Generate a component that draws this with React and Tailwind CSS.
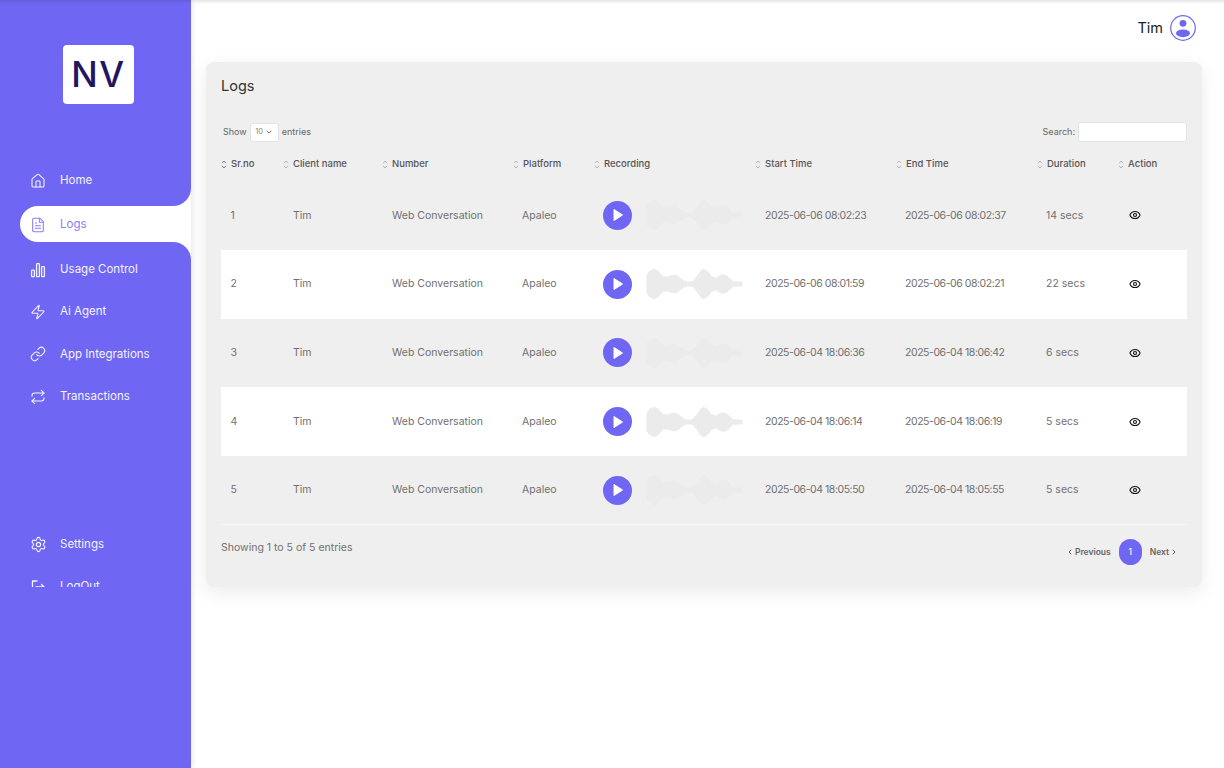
import React from "react";
import { House, FileText, Zap, Link, Repeat, Settings, Eye, ChevronLeft, ChevronRight, ChevronDown } from "lucide-react";

const rows = [
  { id: 1, start: "2025-06-06 08:02:23", end: "2025-06-06 08:02:37", duration: "14 secs" },
  { id: 2, start: "2025-06-06 08:01:59", end: "2025-06-06 08:02:21", duration: "22 secs" },
  { id: 3, start: "2025-06-04 18:06:36", end: "2025-06-04 18:06:42", duration: "6 secs" },
  { id: 4, start: "2025-06-04 18:06:14", end: "2025-06-04 18:06:19", duration: "5 secs" },
  { id: 5, start: "2025-06-04 18:05:50", end: "2025-06-04 18:05:55", duration: "5 secs" },
];

const columns = [
  { label: "Sr.no", width: "w-[62px]", sorted: true },
  { label: "Client name", width: "w-[99px]" },
  { label: "Number", width: "w-[131px]" },
  { label: "Platform", width: "w-[81px]" },
  { label: "Recording", width: "w-[161px]" },
  { label: "Start Time", width: "w-[141px]" },
  { label: "End Time", width: "w-[141px]" },
  { label: "Duration", width: "w-[81px]" },
  { label: "Action", width: "w-[69px]" },
];

// [x, half height] points of the wave form
const envelope = [[0, 10], [3, 14], [8, 16], [12, 14], [16, 9], [20, 8], [26, 10], [30, 10], [34, 7], [38, 4], [42, 3], [46, 3.5], [50, 8], [54, 14], [57, 16], [61, 14], [65, 9], [69, 7], [74, 10], [78, 10.5], [82, 8], [86, 4], [90, 2.5], [96, 2.5]];

function heightAt(x) {
  for (let i = 1; i < envelope.length; i++) {
    const [x0, h0] = envelope[i - 1];
    const [x1, h1] = envelope[i];
    if (x <= x1) return h0 + ((h1 - h0) * (x - x0)) / (x1 - x0);
  }
  return 2.5;
}

function wavePath() {
  const top = [];
  const bottom = [];
  for (let x = 0; x <= 96; x += 0.75) {
    const jag = x < 88 ? [0, 1.3, 0.3, 1.6][Math.round(x / 0.75) % 4] : 0;
    const h = heightAt(x) - jag;
    top.push(`${x},${(16 - h).toFixed(1)}`);
    bottom.unshift(`${x},${(16 + h).toFixed(1)}`);
  }
  return `M${top.join(" L")} L${bottom.join(" L")} Z`;
}

function Wave() {
  return (
    <svg width="97" height="32" viewBox="0 0 96 32" className="block">
      <path d={wavePath()} fill="#ebebeb" />
    </svg>
  );
}

function BarsIcon() {
  return (
    <svg width="16" height="16" viewBox="0 0 16 16" fill="none" stroke="currentColor" strokeWidth="1.3">
      <rect x="1.6" y="8.2" width="2.8" height="6.4" rx="0.6" />
      <rect x="6.6" y="1.6" width="2.8" height="13" rx="0.6" />
      <rect x="11.6" y="4.6" width="2.8" height="10" rx="0.6" />
    </svg>
  );
}

function LogOutIcon() {
  return (
    <svg width="16" height="16" viewBox="0 0 16 16" fill="none" stroke="currentColor" strokeWidth="1.3" strokeLinecap="round" strokeLinejoin="round">
      <path d="M7 2H2.5v12H7" />
      <path d="M6 8h8M11.5 5.5 14 8l-2.5 2.5" />
    </svg>
  );
}

function SortIcon({ sorted }) {
  return (
    <svg width="6" height="9" viewBox="0 0 6 9" fill="none" stroke={sorted ? "#666" : "#a8a8a8"} strokeWidth="0.8" className="shrink-0">
      <path d="M1 3.2 3 1l2 2.2M1 5.8 3 8l2-2.2" />
    </svg>
  );
}

function NavItem({ icon, label, className = "" }) {
  return (
    <div className={`flex h-[42.5px] items-center pl-[30px] text-[#f4f3ff] ${className}`}>
      <span className="flex w-[30px] shrink-0">{icon}</span>
      <span className="text-[11.5px]">{label}</span>
    </div>
  );
}

function Sidebar() {
  return (
    <aside className="z-10 w-[191px] shrink-0 bg-[#6f67f3] shadow-[2px_0_5px_rgba(0,0,0,0.08)]">
      <div className="flex justify-center pt-[45px] pl-[6px]">
        <div className="flex h-[59px] w-[71px] items-center justify-center rounded-[4px] bg-white text-[35px] font-medium tracking-[1.5px] text-[#25145f]">NV</div>
      </div>
      <nav className="mt-[54px] h-[429px] overflow-hidden">
        <div className="bg-white">
          <NavItem icon={<House size={16} strokeWidth={1.6} />} label="Home" className="h-[48px] rounded-br-[18px] bg-[#6f67f3] pb-[2px]" />
        </div>
        <div className="bg-[#6f67f3]">
          <div className="ml-[20px] flex h-[36px] items-center rounded-l-[18px] bg-white pt-[1px] pl-[10px] text-[#8780f5]">
            <span className="flex w-[30px] shrink-0"><FileText size={16} strokeWidth={1.6} /></span>
            <span className="text-[11.5px]">Logs</span>
          </div>
        </div>
        <div className="bg-white">
          <NavItem icon={<BarsIcon />} label="Usage Control" className="h-[48.5px] rounded-tr-[18px] bg-[#6f67f3] pt-[7px]" />
        </div>
        <NavItem icon={<Zap size={16} strokeWidth={1.6} />} label="Ai Agent" />
        <NavItem icon={<Link size={16} strokeWidth={1.6} />} label="App Integrations" />
        <NavItem icon={<Repeat size={16} strokeWidth={1.6} />} label="Transactions" />
        <div className="h-[105px]" />
        <NavItem icon={<Settings size={17} strokeWidth={1.6} />} label="Settings" />
        <NavItem icon={<LogOutIcon />} label="LogOut" />
      </nav>
    </aside>
  );
}

function LogsTable() {
  return (
    <table className="w-[966px] table-fixed border-collapse">
      <thead>
        <tr className="h-[33px]">
          {columns.map((c) => (
            <th key={c.label} className={`${c.width} p-0 text-left text-[9.5px] font-medium text-[#555]`}>
              <span className="flex items-center gap-[4px]">
                <SortIcon sorted={c.sorted} />
                {c.label}
              </span>
            </th>
          ))}
        </tr>
      </thead>
      <tbody className="border-b border-[#f7f7f7]">
        {rows.map((r) => (
          <tr key={r.id} className={`h-[68.75px] text-[10.5px] text-[#707070] ${r.id % 2 === 0 ? "bg-white" : ""}`}>
            <td className="pl-[9.5px]">{r.id}</td>
            <td className="pl-[10px]">Tim</td>
            <td className="pl-[10px]">Web Conversation</td>
            <td className="pl-[9px]">Apaleo</td>
            <td className="pl-[9px]">
              <div className="flex items-center gap-[14px]">
                <button className="flex size-[29px] items-center justify-center rounded-full bg-[#6f67f3]">
                  <svg width="12" height="14" viewBox="0 0 12 14" fill="white" stroke="white" strokeLinejoin="round"><path d="M2 1.5 10.5 7 2 12.5z" /></svg>
                </button>
                <Wave />
              </div>
            </td>
            <td className="pl-[10px] tracking-[-0.45px]">{r.start}</td>
            <td className="pl-[9px] tracking-[-0.45px]">{r.end}</td>
            <td className="pl-[9px]">{r.duration}</td>
            <td className="pl-[11px] text-[#111]"><Eye size={12} strokeWidth={2.2} /></td>
          </tr>
        ))}
      </tbody>
    </table>
  );
}

export default function App() {
  return (
    <div className="relative flex h-[768px] overflow-hidden bg-white font-['Inter',sans-serif] text-[#333]">
      <div className="pointer-events-none absolute inset-x-0 top-0 z-20 h-[4px] bg-gradient-to-b from-black/10 to-transparent" />
      <Sidebar />
      <main className="flex-1 pl-[15px] pr-[22px]">
        <header className="flex h-[62px] items-start justify-end gap-[7px] pt-[14px] pr-[6px]">
          <span className="mt-[4px] text-[14.5px] leading-[20px] text-[#222]">Tim</span>
          <svg width="26" height="28" viewBox="0 0 26 28">
            <circle cx="13" cy="14" r="12.3" fill="none" stroke="#6f67f3" strokeWidth="1.2" />
            <circle cx="13" cy="9.3" r="3.4" fill="#6f67f3" />
            <ellipse cx="13" cy="19.3" rx="7" ry="3.9" fill="#6f67f3" />
          </svg>
        </header>
        <section className="h-[525px] rounded-[8px] bg-[#efefef] px-[15px] shadow-[0_6px_20px_rgba(0,0,0,0.08)]">
          <h1 className="pt-[15px] text-[14.5px] leading-[18px] text-[#333]">Logs</h1>
          <div className="mt-[26px] flex h-[22px] items-center justify-between text-[9px] text-[#666]">
            <div className="flex items-center gap-[3px] pl-[2px]">
              <span>Show</span>
              <span className="flex h-[19px] w-[29px] items-center justify-center gap-[2px] rounded-[3px] border border-[#e4e4e4] bg-white text-[7.5px] text-[#888]">
                10 <ChevronDown size={8} strokeWidth={2.5} className="text-[#555]" />
              </span>
              <span>entries</span>
            </div>
            <div className="flex items-center gap-[3px]">
              <span>Search:</span>
              <input className="h-[20px] w-[109px] rounded-[3px] border border-[#e4e4e4] bg-white" />
            </div>
          </div>
          <div className="mt-[5px]"><LogsTable /></div>
          <div className="flex items-start justify-between pt-[14px]">
            <span className="mt-[2px] text-[10.5px] leading-[14px] text-[#707070]">Showing 1 to 5 of 5 entries</span>
            <div className="flex items-center pr-[9px] text-[8.5px] font-semibold text-[#666]">
              <span className="flex items-center gap-[1px]"><ChevronLeft size={8} strokeWidth={3} />Previous</span>
              <span className="mx-[8px] flex h-[26px] w-[23px] items-center justify-center rounded-full bg-[#6f67f3] font-medium text-white">1</span>
              <span className="flex items-center gap-[1px]">Next<ChevronRight size={8} strokeWidth={3} /></span>
            </div>
          </div>
        </section>
      </main>
    </div>
  );
}
